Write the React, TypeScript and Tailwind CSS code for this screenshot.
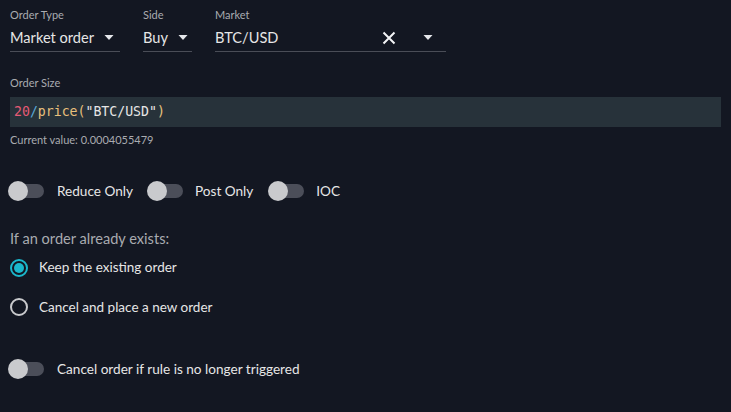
import React from "react";

const Caret = () => (
  <svg width="10" height="6" viewBox="0 0 10 6" className="shrink-0">
    <path d="M0.5 0 L9.5 0 L5 5 Z" fill="#e5e7eb" />
  </svg>
);

const Toggle = () => (
  <div className="relative w-[36px] h-[20px] shrink-0">
    <div className="absolute left-[2px] top-[3px] w-[34px] h-[14px] rounded-full bg-[#4b4e59]" />
    <div className="absolute left-0 top-0 w-[20px] h-[20px] rounded-full bg-[#c9cacd]" />
  </div>
);

const Radio = ({ checked }: { checked?: boolean }) => (
  <div
    className={`w-[18px] h-[18px] rounded-full border-2 flex items-center justify-center shrink-0 ${
      checked ? "border-[#1bb8cc]" : "border-[#c9cacd]"
    }`}
  >
    {checked && <div className="w-[10px] h-[10px] rounded-full bg-[#1bb8cc]" />}
  </div>
);

export default function App() {
  return (
    <div
      className="w-[731px] h-[412px] bg-[#131722] text-[#e6e6e6] px-[10px] pt-[8px]"
      style={{ fontFamily: "Lato, 'Liberation Sans', sans-serif" }}
    >
      <div className="flex gap-[23px]">
        <div className="w-[110px]">
          <div className="text-[11px] text-[#a9abb0] leading-[14px]">Order Type</div>
          <div className="flex items-center h-[30px] pt-[2px] border-b border-[#4a4d57] gap-[10px]">
            <span className="text-[14.6px]">Market order</span>
            <Caret />
          </div>
        </div>
        <div className="w-[49px]">
          <div className="text-[11px] text-[#a9abb0] leading-[14px]">Side</div>
          <div className="flex items-center h-[30px] pt-[2px] border-b border-[#4a4d57] gap-[10px]">
            <span className="text-[14.6px]">Buy</span>
            <Caret />
          </div>
        </div>
        <div className="w-[231px]">
          <div className="text-[11px] text-[#a9abb0] leading-[14px]">Market</div>
          <div className="flex items-center h-[30px] pt-[2px] border-b border-[#4a4d57]">
            <span className="text-[14.6px] flex-1">BTC/USD</span>
            <svg width="14" height="14" viewBox="0 0 14 14" className="mr-[27px]">
              <path d="M1.5 1.5 L12.5 12.5 M12.5 1.5 L1.5 12.5" stroke="#f3f4f6" strokeWidth="2" />
            </svg>
            <div className="mr-[13px]">
              <Caret />
            </div>
          </div>
        </div>
      </div>

      <div className="mt-[24px] text-[11px] text-[#a9abb0] leading-[14px]">Order Size</div>
      <div
        className="mt-[7px] h-[30px] bg-[#27323a] flex items-center px-[4px] text-[13.2px] font-medium"
        style={{ fontFamily: "'DejaVu Sans Mono', 'Liberation Mono', monospace" }}
      >
        <span className="text-[#e65a75]">20</span>
        <span className="text-[#5aa9d6]">/</span>
        <span className="text-[#e8c07c]">price(</span>
        <span className="text-[#e6e6e6]">"BTC/USD"</span>
        <span className="text-[#e8c07c]">)</span>
      </div>
      <div className="mt-[6px] text-[11px] text-[#a9abb0] leading-[14px]">Current value: 0.0004055479</div>

      <div className="mt-[34px] flex items-center">
        <div className="-ml-[2px]"><Toggle /></div>
        <span className="ml-[13px] text-[13.6px]">Reduce Only</span>
        <div className="ml-[14px]"><Toggle /></div>
        <span className="ml-[12px] text-[13.6px]">Post Only</span>
        <div className="ml-[15px]"><Toggle /></div>
        <span className="ml-[12px] text-[13.6px]">IOC</span>
      </div>

      <div className="mt-[29px] text-[14.6px] text-[#a9abb0] leading-[18px]">If an order already exists:</div>
      <div className="mt-[9px] flex items-center gap-[11px]">
        <Radio checked />
        <span className="text-[13.5px]">Keep the existing order</span>
      </div>
      <div className="mt-[19px] flex items-center gap-[11px]">
        <Radio />
        <span className="text-[13.5px]">Cancel and place a new order</span>
      </div>

      <div className="mt-[42px] flex items-center">
        <div className="-ml-[2px]"><Toggle /></div>
        <span className="ml-[13px] text-[13.6px]">Cancel order if rule is no longer triggered</span>
      </div>
    </div>
  );
}
